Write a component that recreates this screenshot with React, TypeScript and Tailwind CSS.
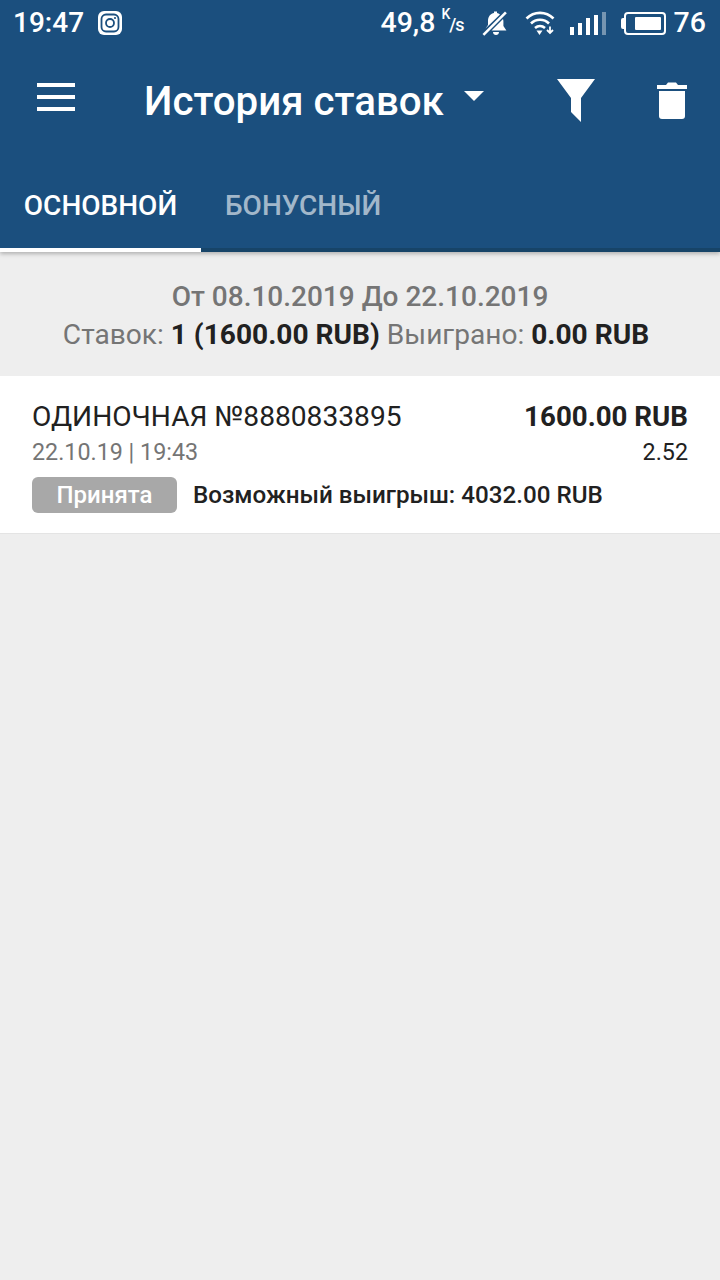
function StatusIcons() {
  return (
    <div className="flex items-center">
      <span className="text-[28.500px] font-medium leading-none">49,8</span>
      <span className="ml-[6px] mt-[3px] text-[18px] font-medium leading-none tracking-[-1px]">
        <sup className="text-[14px] align-[5px]">K</sup>/s
      </span>
      {/* muted bell */}
      <svg className="ml-[18px]" width="26" height="26" viewBox="0 0 26 26" fill="white">
        <path d="M3.500 18.500 6 15V11C6 6 9 3.500 12 3V1.500h3V3c1 .2 2 .6 3 1.500z" />
        <path d="M21 9c.3.8.4 1.500.4 2.500V16l3 4.500H9.500z" />
        <path d="M11 22h6c0 2-1.300 3-3 3s-3-1-3-3z" />
        <path d="M.5 24 23 1.500l1.800 1.800L2.300 25.800z" />
      </svg>
      {/* wifi */}
      <svg className="ml-[17px]" width="30" height="26" viewBox="0 0 30 26" fill="none" stroke="white" strokeWidth="2.600">
        <path d="M1.500 8.500c7.500-7.500 19.500-7.500 27 0" />
        <path d="M6 13.500c5-5 13-5 18 0" />
        <path d="M10 18c3-2.500 7-2.500 10 0" />
        <path d="M11.500 20.500h6l-3 4.500z" fill="white" stroke="none" />
        <path d="M25 16.500v6M22 20l3 3 3-3" strokeWidth="1.800" />
      </svg>
      {/* signal */}
      <div className="ml-[15px] flex h-[24px] items-end gap-[4px]">
        <div className="h-[8px] w-[4px] bg-white" />
        <div className="h-[12px] w-[4px] bg-white" />
        <div className="h-[17px] w-[4px] bg-white" />
        <div className="h-[20px] w-[4px] bg-white" />
        <div className="h-[23px] w-[4px] bg-white/40" />
      </div>
      {/* battery */}
      <div className="ml-[15px] flex items-center">
        <div className="h-[11px] w-[3px] rounded-l-[2px] bg-white" />
        <div className="flex h-[23px] w-[42px] justify-end rounded-[4px] border-2 border-white p-[3px]">
          <div className="h-full w-[26px] rounded-[1px] bg-white" />
        </div>
      </div>
      <span className="ml-[8px] text-[28.500px] font-medium leading-none">76</span>
    </div>
  );
}

export default function App() {
  return (
    <div className="flex h-[1280px] w-[720px] flex-col bg-[#eeeeee] font-['Roboto',sans-serif]">
      <header className="h-[252px] bg-[#1b4f7e] text-white shadow-[0_2px_4px_rgba(0,0,0,0.25)]">
        {/* Status bar */}
        <div className="flex h-[46px] items-center justify-between pl-[13px] pr-[14px]">
          <div className="flex items-center">
            <span className="text-[28px] font-medium leading-none">19:47</span>
            <svg className="ml-[14px]" width="24" height="24" viewBox="0 0 24 24">
              <rect width="24" height="24" rx="6" fill="white" />
              <rect x="3.500" y="3.500" width="17" height="17" rx="4.500" fill="none" stroke="#1b4f7e" strokeWidth="1.800" />
              <circle cx="12" cy="12" r="4" fill="none" stroke="#1b4f7e" strokeWidth="1.800" />
              <circle cx="17" cy="7" r="1.100" fill="#1b4f7e" />
            </svg>
          </div>
          <StatusIcons />
        </div>

        {/* Toolbar */}
        <div className="flex h-[112px] items-center">
          <div className="-mt-[10px] ml-[37px] flex w-[38px] flex-col gap-[8px]">
            <div className="h-[4px] bg-white" />
            <div className="h-[4px] bg-white" />
            <div className="h-[4px] bg-white" />
          </div>
          <div className="ml-[69px] flex items-center">
            <span className="text-[40.250px] font-medium leading-none">История ставок</span>
            <svg className="-mt-[12px] ml-[20px]" width="20" height="10" viewBox="0 0 20 10" fill="white">
              <path d="M0 0h20L10 10z" />
            </svg>
          </div>
          <svg className="-mt-[2px] ml-[73px]" width="38" height="44" viewBox="0 0 38 44" fill="white">
            <path d="M0 0h38L24 19v24L14 33V19z" />
          </svg>
          <svg className="-mt-[4px] ml-[62px]" width="30" height="38" viewBox="0 0 30 38" fill="white">
            <path d="M0 4h9l2-2.500h8L21 4h9v4H0z" />
            <path d="M2 10h26v25a3 3 0 0 1-3 3H5a3 3 0 0 1-3-3z" />
          </svg>
        </div>

        {/* Tabs */}
        <div className="flex h-[94px]">
          <div className="flex h-full w-[201px] items-center justify-center border-b-[4px] border-white pt-[6px] text-[28px] font-medium">
            ОСНОВНОЙ
          </div>
          <div className="flex h-full flex-1 items-center border-b-[4px] border-[#174468] pl-[24px] pt-[6px] text-[28px] font-medium text-white/60">
            БОНУСНЫЙ
          </div>
        </div>
      </header>

      {/* Summary */}
      <section className="flex h-[124px] flex-col items-center pt-[26px] text-[28px] leading-[38px] text-[#757575]">
        <p className="font-medium">От 08.10.2019 До 22.10.2019</p>
        <p className="pr-[8px] text-[28.100px]">
          Ставок: <b className="font-bold text-[#212121]">1 (1600.00 RUB)</b> Выиграно:{" "}
          <b className="font-bold text-[#212121]">0.00 RUB</b>
        </p>
      </section>

      {/* Bet card */}
      <article className="h-[158px] border-b border-[#e4e4e4] bg-white px-[32px] pt-[22px] text-[#212121]">
        <div className="flex items-center justify-between text-[28px] leading-[38px]">
          <span className="text-[28.150px]">ОДИНОЧНАЯ №8880833895</span>
          <span className="text-[27.700px] font-bold">1600.00 RUB</span>
        </div>
        <div className="flex items-center justify-between text-[23.300px] leading-[32px]">
          <span className="text-[#757575]">22.10.19 | 19:43</span>
          <span>2.52</span>
        </div>
        <div className="mt-[9px] flex items-center">
          <span className="flex h-[36px] w-[145px] items-center justify-center rounded-[6px] bg-[#a8a8a8] text-[24px] font-medium text-white">
            Принята
          </span>
          <span className="ml-[16px] text-[24.200px] font-medium">Возможный выигрыш: 4032.00 RUB</span>
        </div>
      </article>
    </div>
  );
}
